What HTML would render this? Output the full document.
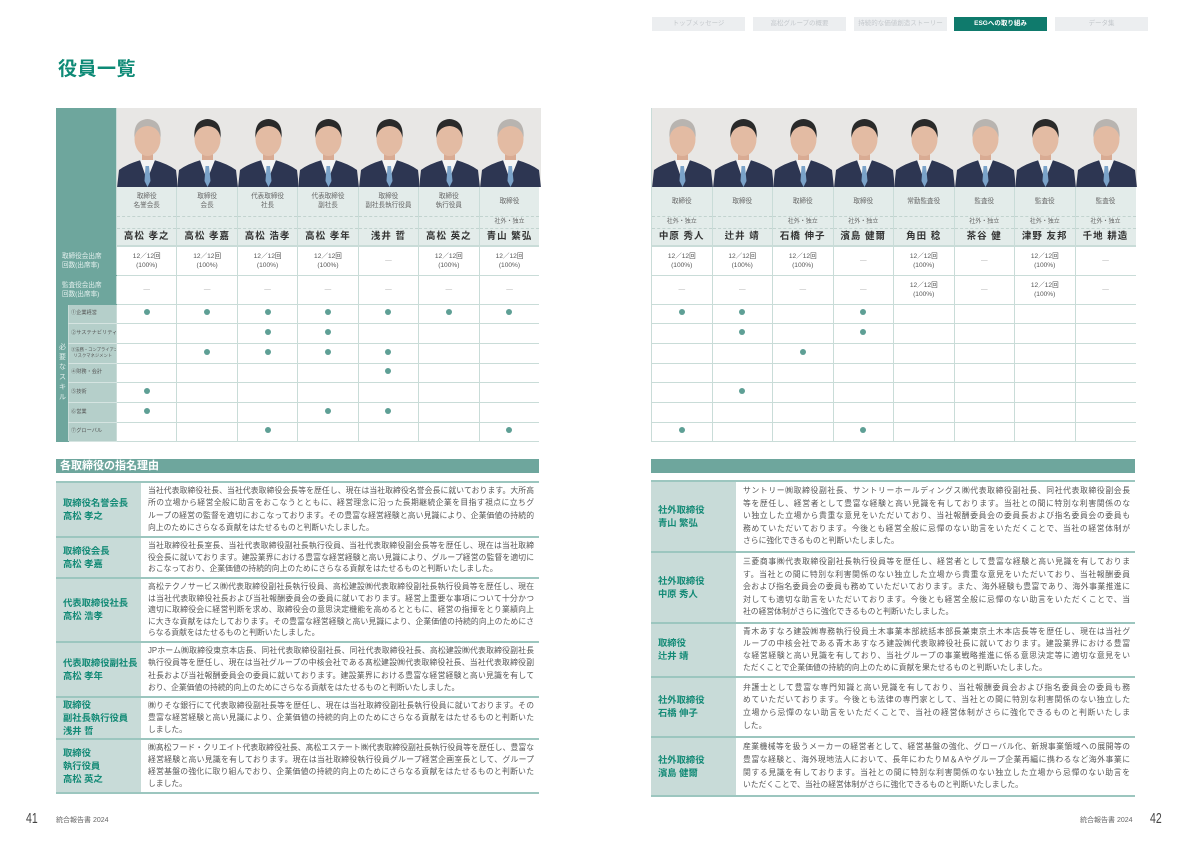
<!DOCTYPE html>
<html><head><meta charset="utf-8"><style>
*{margin:0;padding:0;box-sizing:border-box}
body{width:1191px;height:842px;position:relative;background:#fff;font-family:"Liberation Sans","Noto Sans CJK JP",sans-serif;color:#555;overflow:hidden}
.nav{position:absolute;top:17px;height:14px;width:93px;background:#eceef0;color:#c4c8cc;font-size:6.5px;text-align:center;line-height:14px}
.nav.on{background:#0f7a6c;color:#fff;font-weight:bold}
h1{position:absolute;left:58px;top:54px;font-size:19px;color:#0e8a76;font-weight:bold;letter-spacing:0.5px}
table.t{position:absolute;border-collapse:collapse;table-layout:fixed;font-size:6.6px;text-align:center;color:#555}
table.t td{border-left:1px solid #c9dcd8;border-bottom:1px solid #c9dcd8;padding:0;vertical-align:middle;line-height:9px}
.tl{background:#6ea69d !important;color:#e4f0ee;text-align:left !important;padding-left:5px !important;line-height:9px;border-color:#6ea69d !important}
.sk{background:#b5cfca;text-align:left !important;padding-left:2px !important;font-size:5.2px;color:#555;white-space:nowrap;overflow:hidden;border-bottom:1px solid #d5e4e1 !important}
.ph{padding:0 !important;border-bottom:none !important}
.ph svg{display:block}
.ttl{background:#e3ecea;border-bottom:1px dashed #c2d3cf !important;color:#666}
.soc{background:#e3ecea;border-bottom:1px dashed #c2d3cf !important;color:#666;font-size:6px}
.nm{background:#e3ecea;font-size:9.5px;font-weight:bold;color:#333;letter-spacing:1px;border-bottom:2px solid #c9dcd8 !important}
.dot{display:inline-block;width:6px;height:6px;border-radius:50%;background:#5e9f95}
.dash{color:#aaa}
.bar{position:absolute;top:459px;height:14px;background:#6ea69d;color:#fff;font-size:11px;font-weight:bold;line-height:14px;padding-left:4px}
.rs{position:absolute;border-top:2px solid #9cc6bf}
.row{display:flex;border-bottom:2px solid #9cc6bf;overflow:hidden}
.lab{background:#c8dbd8;color:#138a76;font-weight:bold;font-size:9.3px;line-height:13px;display:flex;flex-direction:column;justify-content:center;padding-left:7px;flex:none}
.txt{flex:1;padding:2px 5px 2px 7px;font-size:7.8px;line-height:12.6px;color:#555;display:flex;flex-direction:column;justify-content:center}
.txt div{text-align:justify;text-align-last:justify;white-space:nowrap;overflow:hidden}
.txt div.l{text-align-last:left}
.foot{position:absolute;top:815px;font-size:7px;color:#666}
.pn{position:absolute;top:810px;font-size:15px;color:#444;transform:scaleX(0.7);transform-origin:left}
</style></head><body>

<div class="nav" style="left:652px">トップメッセージ</div>
<div class="nav" style="left:753px">高松グループの概要</div>
<div class="nav" style="left:854px">持続的な価値創造ストーリー</div>
<div class="nav on" style="left:954px">ESGへの取り組み</div>
<div class="nav" style="left:1055px">データ集</div>

<h1>役員一覧</h1>

<svg width="0" height="0" style="position:absolute">
<defs>
<g id="p">
<rect width="61" height="80" fill="#e8e7e5"/>
<rect x="25" y="44" width="11" height="14" fill="#d9ab93"/>
<path d="M0 80 L2 62 Q10 56 24 52 L30 60 L37 52 Q51 56 59 62 L61 80Z" fill="#2d3652"/>
<path d="M23 52 L30 72 L38 52Z" fill="#f4f4f4"/>
<path d="M28.5 58 L32 58 L33.5 73 L30.5 79 L27.5 73Z" fill="#7aa2c8"/>
<ellipse cx="30.5" cy="31" rx="13" ry="17" fill="#e3bba3"/>
<path d="M17.5 30 Q16 12 30.5 11 Q45 12 43.5 30 Q42 19 30.5 18 Q19 19 17.5 30Z" fill="#2a2a2a"/>
</g>
<g id="pg">
<rect width="61" height="80" fill="#e8e7e5"/>
<rect x="25" y="44" width="11" height="14" fill="#d9ab93"/>
<path d="M0 80 L2 62 Q10 56 24 52 L30 60 L37 52 Q51 56 59 62 L61 80Z" fill="#2d3652"/>
<path d="M23 52 L30 72 L38 52Z" fill="#f4f4f4"/>
<path d="M28.5 58 L32 58 L33.5 73 L30.5 79 L27.5 73Z" fill="#7aa2c8"/>
<ellipse cx="30.5" cy="31" rx="13" ry="17" fill="#e3bba3"/>
<path d="M17.5 30 Q16 12 30.5 11 Q45 12 43.5 30 Q42 19 30.5 18 Q19 19 17.5 30Z" fill="#b8b4b0"/>
</g>
</defs>
</svg>

<!-- LEFT TABLE -->
<table class="t" style="left:56px;top:108px;width:483px">
<colgroup><col style="width:12px"><col style="width:48px"><col span="7" style="width:60.43px"></colgroup>
<tr style="height:79px"><td colspan="2" rowspan="4" class="tl"></td>
<td class="ph"><svg width="61" height="79"><use href="#pg"/></svg></td>
<td class="ph"><svg width="61" height="79"><use href="#p"/></svg></td>
<td class="ph"><svg width="61" height="79"><use href="#p"/></svg></td>
<td class="ph"><svg width="61" height="79"><use href="#p"/></svg></td>
<td class="ph"><svg width="61" height="79"><use href="#p"/></svg></td>
<td class="ph"><svg width="61" height="79"><use href="#p"/></svg></td>
<td class="ph"><svg width="61" height="79"><use href="#pg"/></svg></td></tr>
<tr style="height:29px"><td class="ttl">取締役<br>名誉会長</td><td class="ttl">取締役<br>会長</td><td class="ttl">代表取締役<br>社長</td><td class="ttl">代表取締役<br>副社長</td><td class="ttl">取締役<br>副社長執行役員</td><td class="ttl">取締役<br>執行役員</td><td class="ttl">取締役</td></tr>
<tr style="height:12px"><td class="soc"></td><td class="soc"></td><td class="soc"></td><td class="soc"></td><td class="soc"></td><td class="soc"></td><td class="soc">社外・独立</td></tr>
<tr style="height:18px"><td class="nm">高松 孝之</td><td class="nm">高松 孝嘉</td><td class="nm">高松 浩孝</td><td class="nm">高松 孝年</td><td class="nm">浅井 哲</td><td class="nm">高松 英之</td><td class="nm">青山 繁弘</td></tr>
<tr style="height:29px"><td colspan="2" class="tl">取締役会出席<br>回数(出席率)</td><td>12／12回<br>(100%)</td><td>12／12回<br>(100%)</td><td>12／12回<br>(100%)</td><td>12／12回<br>(100%)</td><td class="dash">—</td><td>12／12回<br>(100%)</td><td>12／12回<br>(100%)</td></tr>
<tr style="height:29px"><td colspan="2" class="tl">監査役会出席<br>回数(出席率)</td><td class="dash">—</td><td class="dash">—</td><td class="dash">—</td><td class="dash">—</td><td class="dash">—</td><td class="dash">—</td><td class="dash">—</td></tr>
<tr style="height:19.7px"><td rowspan="7" class="tl" style="padding:0 !important;text-align:center !important;font-size:7px;line-height:10px">必<br>要<br>な<br>ス<br>キ<br>ル</td><td class="sk">①企業経営</td><td><i class="dot"></i></td><td><i class="dot"></i></td><td><i class="dot"></i></td><td><i class="dot"></i></td><td><i class="dot"></i></td><td><i class="dot"></i></td><td><i class="dot"></i></td></tr>
<tr style="height:19.7px"><td class="sk">②サステナビリティ</td><td></td><td></td><td><i class="dot"></i></td><td><i class="dot"></i></td><td></td><td></td><td></td></tr>
<tr style="height:19.7px"><td class="sk" style="font-size:4.3px;line-height:6px">③法務・コンプライアンス・<br>&nbsp;&nbsp;リスクマネジメント</td><td></td><td><i class="dot"></i></td><td><i class="dot"></i></td><td><i class="dot"></i></td><td><i class="dot"></i></td><td></td><td></td></tr>
<tr style="height:19.7px"><td class="sk">④財務・会計</td><td></td><td></td><td></td><td></td><td><i class="dot"></i></td><td></td><td></td></tr>
<tr style="height:19.7px"><td class="sk">⑤技術</td><td><i class="dot"></i></td><td></td><td></td><td></td><td></td><td></td><td></td></tr>
<tr style="height:19.7px"><td class="sk">⑥営業</td><td><i class="dot"></i></td><td></td><td></td><td><i class="dot"></i></td><td><i class="dot"></i></td><td></td><td></td></tr>
<tr style="height:19.7px"><td class="sk">⑦グローバル</td><td></td><td></td><td><i class="dot"></i></td><td></td><td></td><td></td><td><i class="dot"></i></td></tr>
</table>

<!-- RIGHT TABLE -->
<table class="t" style="left:651px;top:108px;width:484px">
<colgroup><col span="8" style="width:60.5px"></colgroup>
<tr style="height:79px">
<td class="ph"><svg width="61" height="79"><use href="#pg"/></svg></td>
<td class="ph"><svg width="61" height="79"><use href="#p"/></svg></td>
<td class="ph"><svg width="61" height="79"><use href="#p"/></svg></td>
<td class="ph"><svg width="61" height="79"><use href="#p"/></svg></td>
<td class="ph"><svg width="61" height="79"><use href="#p"/></svg></td>
<td class="ph"><svg width="61" height="79"><use href="#pg"/></svg></td>
<td class="ph"><svg width="61" height="79"><use href="#p"/></svg></td>
<td class="ph"><svg width="61" height="79"><use href="#pg"/></svg></td></tr>
<tr style="height:29px"><td class="ttl">取締役</td><td class="ttl">取締役</td><td class="ttl">取締役</td><td class="ttl">取締役</td><td class="ttl">常勤監査役</td><td class="ttl">監査役</td><td class="ttl">監査役</td><td class="ttl">監査役</td></tr>
<tr style="height:12px"><td class="soc">社外・独立</td><td class="soc"></td><td class="soc">社外・独立</td><td class="soc">社外・独立</td><td class="soc"></td><td class="soc">社外・独立</td><td class="soc">社外・独立</td><td class="soc">社外・独立</td></tr>
<tr style="height:18px"><td class="nm">中原 秀人</td><td class="nm">辻井 靖</td><td class="nm">石橋 伸子</td><td class="nm">濱島 健爾</td><td class="nm">角田 稔</td><td class="nm">茶谷 健</td><td class="nm">津野 友邦</td><td class="nm">千地 耕造</td></tr>
<tr style="height:29px"><td>12／12回<br>(100%)</td><td>12／12回<br>(100%)</td><td>12／12回<br>(100%)</td><td class="dash">—</td><td>12／12回<br>(100%)</td><td class="dash">—</td><td>12／12回<br>(100%)</td><td class="dash">—</td></tr>
<tr style="height:29px"><td class="dash">—</td><td class="dash">—</td><td class="dash">—</td><td class="dash">—</td><td>12／12回<br>(100%)</td><td class="dash">—</td><td>12／12回<br>(100%)</td><td class="dash">—</td></tr>
<tr style="height:19.7px"><td><i class="dot"></i></td><td><i class="dot"></i></td><td></td><td><i class="dot"></i></td><td></td><td></td><td></td><td></td></tr>
<tr style="height:19.7px"><td></td><td><i class="dot"></i></td><td></td><td><i class="dot"></i></td><td></td><td></td><td></td><td></td></tr>
<tr style="height:19.7px"><td></td><td></td><td><i class="dot"></i></td><td></td><td></td><td></td><td></td><td></td></tr>
<tr style="height:19.7px"><td></td><td></td><td></td><td></td><td></td><td></td><td></td><td></td></tr>
<tr style="height:19.7px"><td></td><td><i class="dot"></i></td><td></td><td></td><td></td><td></td><td></td><td></td></tr>
<tr style="height:19.7px"><td></td><td></td><td></td><td></td><td></td><td></td><td></td><td></td></tr>
<tr style="height:19.7px"><td><i class="dot"></i></td><td></td><td></td><td><i class="dot"></i></td><td></td><td></td><td></td><td></td></tr>
</table>

<div class="bar" style="left:56px;width:483px">各取締役の指名理由</div>
<div class="bar" style="left:651px;width:484px"></div>

<!-- LEFT REASONS -->
<div class="rs" style="left:56px;top:481px;width:483px">
<div class="row" style="height:55px"><div class="lab" style="width:85px">取締役名誉会長<br>高松 孝之</div><div class="txt">
<div>当社代表取締役社長、当社代表取締役会長等を歴任し、現在は当社取締役名誉会長に就いております。大所高</div>
<div>所の立場から経営全般に助言をおこなうとともに、経営理念に沿った長期継続企業を目指す視点に立ちグ</div>
<div>ループの経営の監督を適切におこなっております。その豊富な経営経験と高い見識により、企業価値の持続的</div>
<div class="l">向上のためにさらなる貢献をはたせるものと判断いたしました。</div></div></div>
<div class="row" style="height:41px"><div class="lab" style="width:85px">取締役会長<br>高松 孝嘉</div><div class="txt">
<div>当社取締役社長室長、当社代表取締役副社長執行役員、当社代表取締役副会長等を歴任し、現在は当社取締</div>
<div>役会長に就いております。建設業界における豊富な経営経験と高い見識により、グループ経営の監督を適切に</div>
<div class="l">おこなっており、企業価値の持続的向上のためにさらなる貢献をはたせるものと判断いたしました。</div></div></div>
<div class="row" style="height:64px"><div class="lab" style="width:85px">代表取締役社長<br>高松 浩孝</div><div class="txt">
<div>高松テクノサービス㈱代表取締役副社長執行役員、高松建設㈱代表取締役副社長執行役員等を歴任し、現在</div>
<div>は当社代表取締役社長および当社報酬委員会の委員に就いております。経営上重要な事項について十分かつ</div>
<div>適切に取締役会に経営判断を求め、取締役会の意思決定機能を高めるとともに、経営の指揮をとり業績向上</div>
<div>に大きな貢献をはたしております。その豊富な経営経験と高い見識により、企業価値の持続的向上のためにさ</div>
<div class="l">らなる貢献をはたせるものと判断いたしました。</div></div></div>
<div class="row" style="height:55px"><div class="lab" style="width:85px">代表取締役副社長<br>高松 孝年</div><div class="txt">
<div>JPホーム㈱取締役東京本店長、同社代表取締役副社長、同社代表取締役社長、高松建設㈱代表取締役副社長</div>
<div>執行役員等を歴任し、現在は当社グループの中核会社である髙松建設㈱代表取締役社長、当社代表取締役副</div>
<div>社長および当社報酬委員会の委員に就いております。建設業界における豊富な経営経験と高い見識を有して</div>
<div class="l">おり、企業価値の持続的向上のためにさらなる貢献をはたせるものと判断いたしました。</div></div></div>
<div class="row" style="height:42px"><div class="lab" style="width:85px">取締役<br>副社長執行役員<br>浅井 哲</div><div class="txt">
<div>㈱りそな銀行にて代表取締役副社長等を歴任し、現在は当社取締役副社長執行役員に就いております。その</div>
<div>豊富な経営経験と高い見識により、企業価値の持続的向上のためにさらなる貢献をはたせるものと判断いた</div>
<div class="l">しました。</div></div></div>
<div class="row" style="height:54px"><div class="lab" style="width:85px">取締役<br>執行役員<br>高松 英之</div><div class="txt">
<div>㈱髙松フード・クリエイト代表取締役社長、髙松エステート㈱代表取締役副社長執行役員等を歴任し、豊富な</div>
<div>経営経験と高い見識を有しております。現在は当社取締役執行役員グループ経営企画室長として、グループ</div>
<div>経営基盤の強化に取り組んでおり、企業価値の持続的向上のためにさらなる貢献をはたせるものと判断いた</div>
<div class="l">しました。</div></div></div>
</div>

<!-- RIGHT REASONS -->
<div class="rs" style="left:651px;top:480px;width:484px">
<div class="row" style="height:71px"><div class="lab" style="width:85px">社外取締役<br>青山 繁弘</div><div class="txt">
<div>サントリー㈱取締役副社長、サントリーホールディングス㈱代表取締役副社長、同社代表取締役副会長</div>
<div>等を歴任し、経営者として豊富な経験と高い見識を有しております。当社との間に特別な利害関係のな</div>
<div>い独立した立場から貴重な意見をいただいており、当社報酬委員会の委員長および指名委員会の委員も</div>
<div>務めていただいております。今後とも経営全般に忌憚のない助言をいただくことで、当社の経営体制が</div>
<div class="l">さらに強化できるものと判断いたしました。</div></div></div>
<div class="row" style="height:71px"><div class="lab" style="width:85px">社外取締役<br>中原 秀人</div><div class="txt">
<div>三菱商事㈱代表取締役副社長執行役員等を歴任し、経営者として豊富な経験と高い見識を有しておりま</div>
<div>す。当社との間に特別な利害関係のない独立した立場から貴重な意見をいただいており、当社報酬委員</div>
<div>会および指名委員会の委員も務めていただいております。また、海外経験も豊富であり、海外事業推進に</div>
<div>対しても適切な助言をいただいております。今後とも経営全般に忌憚のない助言をいただくことで、当</div>
<div class="l">社の経営体制がさらに強化できるものと判断いたしました。</div></div></div>
<div class="row" style="height:54px"><div class="lab" style="width:85px">取締役<br>辻井 靖</div><div class="txt">
<div>青木あすなろ建設㈱専務執行役員土木事業本部統括本部長兼東京土木本店長等を歴任し、現在は当社グ</div>
<div>ループの中核会社である青木あすなろ建設㈱代表取締役社長に就いております。建設業界における豊富</div>
<div>な経営経験と高い見識を有しており、当社グループの事業戦略推進に係る意思決定等に適切な意見をい</div>
<div class="l">ただくことで企業価値の持続的向上のために貢献を果たせるものと判断いたしました。</div></div></div>
<div class="row" style="height:60px"><div class="lab" style="width:85px">社外取締役<br>石橋 伸子</div><div class="txt">
<div>弁護士として豊富な専門知識と高い見識を有しており、当社報酬委員会および指名委員会の委員も務</div>
<div>めていただいております。今後とも法律の専門家として、当社との間に特別な利害関係のない独立した</div>
<div>立場から忌憚のない助言をいただくことで、当社の経営体制がさらに強化できるものと判断いたしま</div>
<div class="l">した。</div></div></div>
<div class="row" style="height:59px"><div class="lab" style="width:85px">社外取締役<br>濱島 健爾</div><div class="txt">
<div>産業機械等を扱うメーカーの経営者として、経営基盤の強化、グローバル化、新規事業領域への展開等の</div>
<div>豊富な経験と、海外現地法人において、長年にわたりM＆Aやグループ企業再編に携わるなど海外事業に</div>
<div>関する見識を有しております。当社との間に特別な利害関係のない独立した立場から忌憚のない助言を</div>
<div class="l">いただくことで、当社の経営体制がさらに強化できるものと判断いたしました。</div></div></div>
</div>

<div class="pn" style="left:26px">41</div>
<div class="foot" style="left:56px">統合報告書 2024</div>
<div class="foot" style="left:1080px">統合報告書 2024</div>
<div class="pn" style="left:1150px">42</div>
</body></html>
